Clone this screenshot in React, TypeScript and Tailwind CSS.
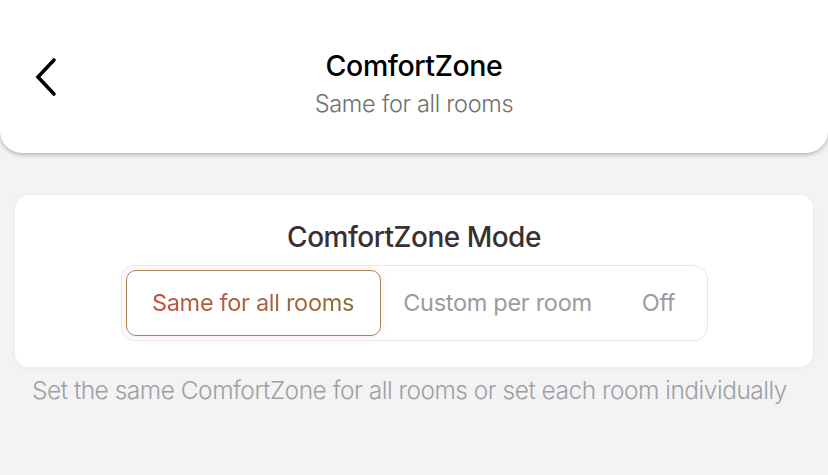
import React from 'react';

const modes = ["Same for all rooms", "Custom per room", "Off"];

export default function App() {
  const active = 0;
  return (
    <div className="min-h-screen w-full bg-[#f3f3f3] font-['Inter',sans-serif]">
      {/* Header */}
      <header className="relative bg-white rounded-b-[22px] shadow-[0_2px_4px_rgba(0,0,0,0.25)] h-[153px] flex flex-col items-center pt-[47px]">
        <button className="absolute left-[30px] top-[56px] w-[30px] h-[42px] flex items-center justify-center">
          <svg width="26" height="40" viewBox="0 0 26 40" fill="none">
            <path d="M22 3 L6 20 L22 37" stroke="#000" strokeWidth="3.6" strokeLinecap="round" strokeLinejoin="miter" />
          </svg>
        </button>
        <h1 className="text-[28.5px] leading-[38px] font-medium text-black tracking-[-0.4px]">ComfortZone</h1>
        <p className="mt-[4px] text-[23.5px] leading-[30px] font-light text-[#6f6f6f] tracking-[-0.3px]">Same for all rooms</p>
      </header>

      {/* Mode card */}
      <section className="mx-[15px] mt-[42px] bg-white rounded-[14px] shadow-[0_1px_6px_rgba(0,0,0,0.04)] h-[172px] flex flex-col items-center pt-[24px]">
        <h2 className="text-[28px] leading-[36px] font-medium text-[#3a3030] tracking-[-0.5px]">ComfortZone Mode</h2>
        <div className="mt-[10px] w-[587px] h-[76px] rounded-[14px] border border-[#e8e8ea] flex items-center px-[4px] gap-[10px]">
          {modes.map((m, i) =>
            i === active ? (
              <div
                key={i}
                className="h-[66px] w-[255px] rounded-[10px] border border-[#a8865a] bg-white flex items-center justify-center shadow-[0_0_8px_rgba(255,190,215,0.4)]"
              >
                <span className="text-[23.5px] tracking-[-0.3px] bg-[#fdf0f4] bg-gradient-to-r from-[#c2503a] to-[#8f6c3a] bg-clip-text text-transparent">
                  {m}
                </span>
              </div>
            ) : (
              <div
                key={i}
                className={
                  (i === 1 ? "w-[214px] " : "flex-1 ") +
                  "h-[66px] flex items-center justify-center text-[23.5px] text-[#9a9ba3] tracking-[-0.3px]"
                }
              >
                {m}
              </div>
            )
          )}
        </div>
      </section>

      <p className="mt-[8px] pl-[32px] whitespace-nowrap text-[24.5px] leading-[30px] font-light text-[#9fa0a6] tracking-[-0.5px]">
        Set the same ComfortZone for all rooms or set each room individually
      </p>
    </div>
  );
}
